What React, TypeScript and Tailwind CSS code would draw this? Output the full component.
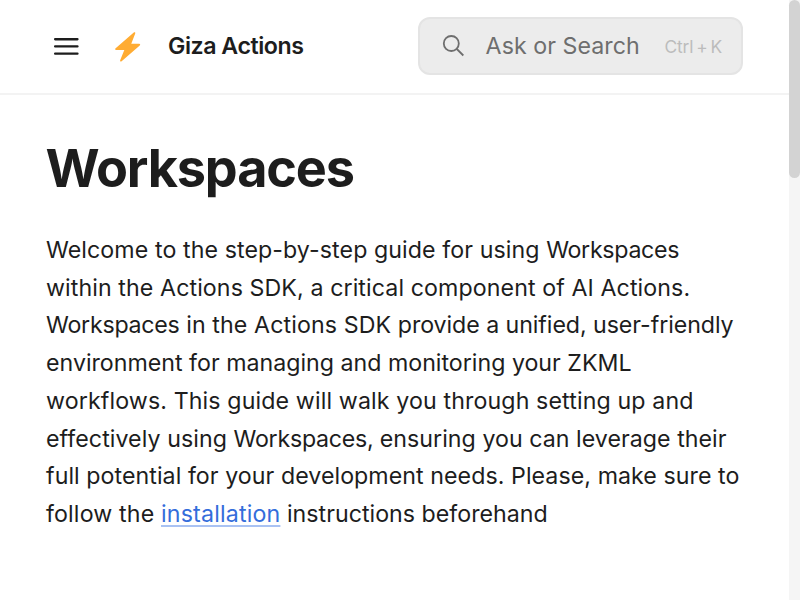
export default function App() {
  return (
    <div className="flex h-[600px] w-[800px] overflow-hidden bg-white font-['Inter',sans-serif] text-[#1d1d1d]">
      <div className="flex w-[789px] flex-col">
        <header className="flex h-[95px] shrink-0 items-start border-b-2 border-[#f3f3f3] pt-[17px] pr-[46px] pl-[46px]">
          <div className="flex h-[58px] grow items-center">
            <button aria-label="Open menu" className="flex w-[41px] pt-px pl-[8px]">
              <svg width="25" height="18" viewBox="0 0 25 18" fill="#1d1d1d">
                <rect x="0" y="0" width="24.6" height="2.4" rx="1.1" />
                <rect x="0" y="7.2" width="24.6" height="2.4" rx="1.1" />
                <rect x="0" y="14.4" width="24.6" height="2.4" rx="1.1" />
              </svg>
            </button>
            <svg className="mt-px ml-[27px]" width="27" height="32" viewBox="-0.7 0 28 32" fill="#ffac33">
              <path d="M20.1.8c.8-.5 1.5.2 1.2 1.1L17.2 12.7h8.2c1.1 0 1.4 1 .6 1.7L7.2 30.7c-.8.7-1.9.1-1.5-1L10 19.1H1.6c-1.2 0-1.5-1-.6-1.8Z" />
            </svg>
            <span className="ml-[27px] text-[23.2px] leading-[29px] font-semibold tracking-[-0.47px]">Giza Actions</span>
          </div>
          <div className="flex h-[58px] w-[325px] items-center rounded-[12px] border-2 border-[#e4e4e4] bg-[#ececec] pr-[19px] pl-[22px]">
            <svg width="24" height="24" viewBox="0 0 24 24" fill="none" stroke="#6e6e6e" strokeWidth="1.8">
              <circle cx="9.3" cy="9.5" r="7.5" />
              <path d="m14.8 15 6.5 6.5" />
            </svg>
            <span className="ml-[19.6px] grow text-[23.2px] tracking-[0.05px] whitespace-nowrap text-[#6e6e6e]">Ask or Search</span>
            <span className="pt-[2px] text-[17.4px] tracking-[-0.1px] [word-spacing:-2px] whitespace-nowrap text-[#bcbcbc]">Ctrl + K</span>
          </div>
        </header>
        <main className="px-[46px] pt-[41px]">
          <h1 className="-ml-px pl-[0.5px] text-[52.2px] leading-[65px] font-bold tracking-[-1.15px]">Workspaces</h1>
          <p className="mt-[31px] text-[23.2px] leading-[37.7px] whitespace-nowrap">
            <span className="tracking-[0.08px]">Welcome to the step-by-step guide for using </span>
            <span className="tracking-[-0.3px]">Workspaces</span><br />
            <span className="tracking-[0.09px]">within the Actions SDK, a critical component of AI Actions.</span><br />
            <span className="tracking-[-0.25px]">Workspaces</span>
            <span className="tracking-[0.1px]"> in the Actions SDK </span>
            <span className="tracking-[-0.07px]">provide a unified, user-friendly</span><br />
            <span>environment for managing and monitoring your ZKML</span><br />
            <span className="tracking-[0.12px]">workflows. This guide will walk you through setting up and</span><br />
            <span className="tracking-[0.06px]">effectively using </span>
            <span className="tracking-[-0.25px]">Workspaces, </span>
            <span className="tracking-[0.03px]">ensuring you can leverage their</span><br />
            <span className="tracking-[0.055px]">full potential for your development needs. Please, make sure to</span><br />
            <span className="tracking-[0.15px]">follow the </span>
            <a href="#installation" className="tracking-[0.17px] text-[#346ddb] underline decoration-[#a9c2f3] decoration-2 underline-offset-[3px]">installation</a>
            <span className="tracking-[0.02px]"> instructions beforehand</span>
          </p>
        </main>
      </div>
      <div className="h-full w-[11px] bg-[#f5f5f5]">
        <div className="h-[178px] rounded-[6px] bg-[#d3d3d3]" />
      </div>
    </div>
  )
}
